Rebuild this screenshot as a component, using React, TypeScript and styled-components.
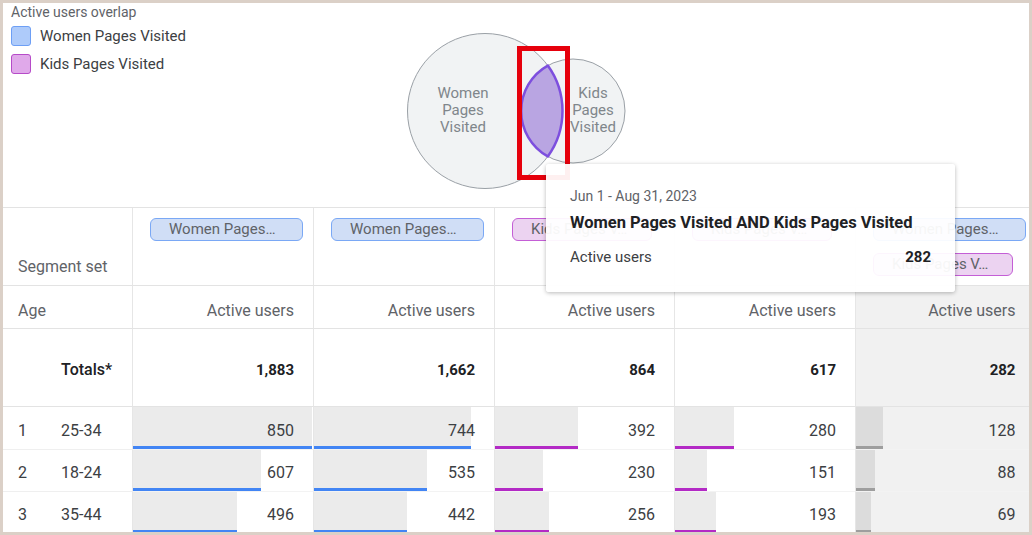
import styled, { createGlobalStyle } from 'styled-components';

const GlobalStyle = createGlobalStyle`
  html, body {
    margin: 0;
    padding: 0;
    background: #fff;
  }
  body {
    font-family: Roboto, "Noto Sans", Arial, sans-serif;
  }
  * {
    box-sizing: border-box;
  }
`;

type Tone = 'blue' | 'purple' | 'gray';

type Column = {
  chips: Tone[];
  total: string;
  values: number[];
  tone: Tone;
};

const MAX_VALUE = 850;
const BAR_FULL = 179;

const columns: Column[] = [
  { chips: ['blue'], total: '1,883', values: [850, 607, 496], tone: 'blue' },
  { chips: ['blue'], total: '1,662', values: [744, 535, 442], tone: 'blue' },
  { chips: ['purple'], total: '864', values: [392, 230, 256], tone: 'purple' },
  { chips: ['purple'], total: '617', values: [280, 151, 193], tone: 'purple' },
  { chips: ['blue', 'purple'], total: '282', values: [128, 88, 69], tone: 'gray' },
];

const ages = ['25-34', '18-24', '35-44'];

const chipLabel: Record<Tone, string> = {
  blue: 'Women Pages…',
  purple: 'Kids Pages V…',
  gray: '',
};

function Venn() {
  return (
    <VennSvg width="230" height="170" viewBox="0 0 230 170">
      <circle cx="84" cy="85" r="77.5" fill="#f1f3f4" stroke="#9aa0a6" strokeWidth="1" />
      <circle cx="172" cy="85" r="52" fill="#f1f3f4" stroke="#9aa0a6" strokeWidth="1" />
      <path
        d="M146.8 39.6 A77.5 77.5 0 0 1 146.8 130.4 A52 52 0 0 1 146.8 39.6 Z"
        fill="#b9a5e2"
        stroke="#7d4fde"
        strokeWidth="2.5"
      />
      <VennText x="62" y="67">
        <tspan x="62" dy="0">Women</tspan>
        <tspan x="62" dy="17">Pages</tspan>
        <tspan x="62" dy="17">Visited</tspan>
      </VennText>
      <VennText x="192" y="67">
        <tspan x="192" dy="0">Kids</tspan>
        <tspan x="192" dy="17">Pages</tspan>
        <tspan x="192" dy="17">Visited</tspan>
      </VennText>
    </VennSvg>
  );
}

function App() {
  return (
    <>
      <GlobalStyle />
      <Frame>
        <Chart>
          <Legend>
            <ChartTitle>Active users overlap</ChartTitle>
            <LegendItem>
              <Swatch $tone="blue" />
              Women Pages Visited
            </LegendItem>
            <LegendItem>
              <Swatch $tone="purple" />
              Kids Pages Visited
            </LegendItem>
          </Legend>
          <Venn />
          <div />
        </Chart>

        <Table>
          <LabelCell $align="end">Segment set</LabelCell>
          {columns.map((col, i) => (
            <SegmentCell key={`seg-${i}`}>
              {col.chips.map((tone, j) => (
                <Chip key={j} $tone={tone}>
                  {chipLabel[tone]}
                </Chip>
              ))}
            </SegmentCell>
          ))}

          <LabelCell $align="center">Age</LabelCell>
          {columns.map((col, i) => (
            <MetricHead key={`head-${i}`} $highlight={col.tone === 'gray'}>
              Active users
            </MetricHead>
          ))}

          <TotalLabel>Totals*</TotalLabel>
          {columns.map((col, i) => (
            <TotalCell key={`tot-${i}`} $highlight={col.tone === 'gray'}>
              {col.total}
            </TotalCell>
          ))}

          {ages.map((age, r) => (
            <Row key={age}>
              <RowLabel>
                <RowIndex>{r + 1}</RowIndex>
                {age}
              </RowLabel>
              {columns.map((col, i) => (
                <DataCell key={i} $highlight={col.tone === 'gray'}>
                  <Bar
                    $tone={col.tone}
                    style={{ width: `${(col.values[r] / MAX_VALUE) * BAR_FULL}px` }}
                  />
                  <Value>{col.values[r]}</Value>
                </DataCell>
              ))}
            </Row>
          ))}
        </Table>

        <Highlight />

        <Tooltip>
          <TipDate>Jun 1 - Aug 31, 2023</TipDate>
          <TipTitle>Women Pages Visited AND Kids Pages Visited</TipTitle>
          <TipRow>
            <span>Active users</span>
            <strong>282</strong>
          </TipRow>
        </Tooltip>
      </Frame>
    </>
  );
}

export default App;

const toneLine: Record<Tone, string> = {
  blue: '#4285f4',
  purple: '#b32ac5',
  gray: '#9e9e9e',
};

const Frame = styled.div`
  position: relative;
  width: 1032px;
  height: 535px;
  border: 3px solid #dbd0c7;
  overflow: hidden;
  background: #fff;
  color: #3c4043;
`;

const Chart = styled.section`
  height: 204px;
  display: grid;
  grid-template-columns: 1fr auto 1fr;
`;

const Legend = styled.div`
  padding-left: 8px;
  display: flex;
  flex-direction: column;
  gap: 8px;
`;

const ChartTitle = styled.div`
  font-size: 14px;
  line-height: 18px;
  color: #5f6368;
  margin-bottom: -4px;
`;

const LegendItem = styled.div`
  display: flex;
  align-items: center;
  gap: 9px;
  font-size: 15px;
  line-height: 20px;
  color: #3c4043;
  margin-top: 1px;
  margin-bottom: -1px;
`;

const Swatch = styled.span<{ $tone: Tone }>`
  width: 20px;
  height: 20px;
  border-radius: 3px;
  background: ${p => (p.$tone === 'blue' ? '#aecbfa' : '#e0a9ea')};
  border: 1.5px solid ${p => (p.$tone === 'blue' ? '#6d9ff5' : '#b64bc8')};
`;

const VennSvg = styled.svg`
  display: block;
  margin-top: 23px;
`;

const VennText = styled.text`
  font-family: Roboto, Arial, sans-serif;
  font-size: 15px;
  fill: #80868b;
  text-anchor: middle;
  dominant-baseline: central;
`;

const Table = styled.div`
  display: grid;
  grid-template-columns: 129px 181px 181px 180px 181px 1fr;
  grid-template-rows: 78px 43px 78px 43px 42px 42px;
  border-top: 1px solid #e3e3e3;
  font-size: 16px;
`;

const Row = styled.div`
  display: contents;
`;

const cellBase = `
  display: flex;
  border-bottom: 1px solid #e3e3e3;
`;

const LabelCell = styled.div<{ $align: 'end' | 'center' }>`
  ${cellBase}
  align-items: ${p => (p.$align === 'end' ? 'flex-end' : 'center')};
  padding: ${p => (p.$align === 'end' ? '0 0 9px 15px' : '6px 0 0 15px')};
  color: #5f6368;
`;

const MetricCell = styled.div<{ $highlight?: boolean }>`
  ${cellBase}
  border-left: 1px solid #e6e6e6;
  background: ${p => (p.$highlight ? '#f1f1f1' : '#fff')};
  padding-right: ${p => (p.$highlight ? '15px' : '19px')};
`;

const SegmentCell = styled(MetricCell)`
  flex-direction: column;
  align-items: flex-start;
  gap: 12px;
  padding: 10px 4px 0 17px;
`;

const Chip = styled.span<{ $tone: Tone }>`
  height: 23px;
  padding: 0 ${p => (p.$tone === 'blue' ? '27px' : '24px')} 0 18px;
  border-radius: 6px;
  font-size: 15px;
  line-height: 20px;
  color: #5f6368;
  white-space: nowrap;
  background: ${p => (p.$tone === 'blue' ? '#d0def6' : '#ecd3f1')};
  border: 1.5px solid ${p => (p.$tone === 'blue' ? '#7aa8f5' : '#c45ed6')};
`;

const MetricHead = styled(MetricCell)`
  align-items: center;
  justify-content: flex-end;
  padding-top: 6px;
  color: #5f6368;
`;

const TotalLabel = styled.div`
  ${cellBase}
  align-items: center;
  padding: 4px 0 0 58px;
  color: #202124;
  font-weight: 500;
`;

const TotalCell = styled(MetricCell)`
  align-items: center;
  justify-content: flex-end;
  padding-top: 4px;
  font-weight: 700;
  font-size: 15px;
  color: #202124;
`;

const RowLabel = styled.div`
  ${cellBase}
  border-bottom-color: #efefef;
  align-items: center;
  padding: 4px 0 0 15px;
  color: #3c4043;
`;

const RowIndex = styled.span`
  width: 43px;
`;

const DataCell = styled(MetricCell)`
  position: relative;
  border-bottom-color: #f3f3f3;
  align-items: center;
  justify-content: flex-end;
  padding-top: 4px;
  color: #3c4043;
`;

const Bar = styled.span<{ $tone: Tone }>`
  position: absolute;
  left: 0;
  top: 0;
  bottom: 0;
  background: ${p => (p.$tone === 'gray' ? '#dcdcdc' : '#ebebeb')};
  border-bottom: 3px solid ${p => toneLine[p.$tone]};
`;

const Value = styled.span`
  position: relative;
`;

const Highlight = styled.div`
  position: absolute;
  left: 514px;
  top: 43px;
  width: 53px;
  height: 134px;
  border: 5px solid #e6000c;
`;

const Tooltip = styled.div`
  position: absolute;
  left: 543px;
  top: 161px;
  width: 409px;
  height: 128px;
  padding: 23px 24px;
  background: rgba(255, 255, 255, 0.94);
  border-radius: 3px;
  box-shadow: 0 1px 4px rgba(0, 0, 0, 0.28);
`;

const TipDate = styled.div`
  font-size: 14px;
  line-height: 18px;
  color: #5f6368;
`;

const TipTitle = styled.div`
  margin-top: 8px;
  font-size: 16.5px;
  line-height: 20px;
  font-weight: 700;
  color: #202124;
`;

const TipRow = styled.div`
  margin-top: 14px;
  display: flex;
  justify-content: space-between;
  font-size: 15px;
  line-height: 20px;
  color: #3c4043;

  strong {
    font-weight: 700;
    color: #202124;
  }
`;
